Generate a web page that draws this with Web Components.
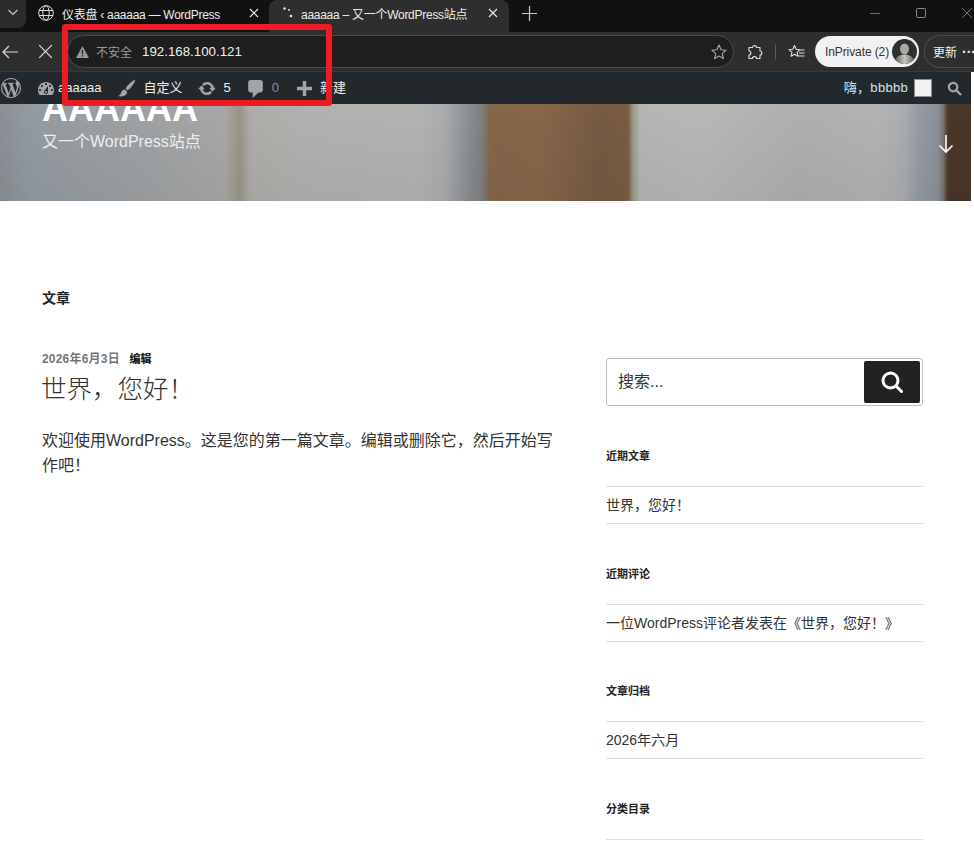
<!DOCTYPE html>
<html lang="zh-CN">
<head>
<meta charset="utf-8">
<title>aaaaaa</title>
<style>
  html, body { margin: 0; padding: 0; background: #fff; }
  body { width: 974px; height: 849px; overflow: hidden; font-family: "Liberation Sans", "Noto Sans CJK SC", sans-serif; }
</style>
</head>
<body>
<browser-shell>
  <wp-adminbar></wp-adminbar>
  <site-hero></site-hero>
  <site-content>
    <blog-post slot="main"></blog-post>
    <search-box slot="side"></search-box>
    <side-widget slot="side" heading="近期文章"><div>世界，您好！</div></side-widget>
    <side-widget slot="side" heading="近期评论"><div>一位WordPress评论者发表在《世界，您好！》</div></side-widget>
    <side-widget slot="side" heading="文章归档"><div>2026年六月</div></side-widget>
    <side-widget slot="side" heading="分类目录"></side-widget>
  </site-content>
</browser-shell>

<script>
class BrowserShell extends HTMLElement {
  constructor() {
    super();
    this.shadow = this.attachShadow({ mode: 'open' });
  }

  connectedCallback() {
    this.shadow.innerHTML = /*html*/`
      <style>
        :host { display: block; position: relative; height: 849px; overflow: hidden; color: #e6e6e6; }
        .tabs { display: flex; height: 32px; background: #111; font-size: 12px; }
        .menu { width: 26px; height: 24px; padding-bottom: 4px; background: #2b2b2b; border-radius: 0 0 8px 0; display: flex; align-items: center; justify-content: center; }
        .tab { display: flex; align-items: center; box-sizing: border-box; height: 32px; padding-bottom: 6px; }
        .tab.one { width: 243px; padding-left: 12px; padding-right: 10px; }
        .tab.two { width: 240px; padding-left: 14px; padding-right: 11px; background: #2e2e2e; border-radius: 8px 8px 0 0; }
        .tab span { flex: 1; margin-left: 8px; white-space: nowrap; color: #ececec; letter-spacing: -.27px; }
        .new { width: 40px; padding-bottom: 6px; box-sizing: border-box; display: flex; align-items: center; justify-content: center; }
        .win { margin-left: auto; display: flex; align-items: center; gap: 36px; padding: 0 2px 6px 0; }
        .bar { display: flex; align-items: center; height: 40px; background: #2e2e2e; box-sizing: border-box; border-bottom: 1px solid #3a3a3a; }
        .nav { flex: none; width: 67px; display: flex; align-items: center; gap: 21px; padding-left: 2px; box-sizing: border-box; }
        .url { flex: none; width: 667px; height: 33px; box-sizing: border-box; border: 1px solid #4c4c4c; border-radius: 17px; background: #1e1e1e; display: flex; align-items: center; padding: 0 6px 0 8px; }
        .warn { font-size: 12px; color: #9a9a9a; margin: 0 10px 0 7px; }
        .host { font-size: 13.3px; color: #f0f0f0; flex: 1; }
        .tools { flex: none; display: flex; align-items: center; width: 81px; padding-left: 13px; box-sizing: border-box; gap: 12px; }
        .sep { width: 1px; height: 16px; background: #5a5a5a; }
        .priv { flex: none; width: 104px; height: 31px; box-sizing: border-box; border-radius: 16px; background: #f1f1f1; color: #333; font-size: 12px; display: flex; align-items: center; justify-content: space-between; padding: 0 2px 0 10px; letter-spacing: -.1px; }
        .upd { margin-left: 5px; flex: 1; min-width: 0; overflow: hidden; height: 31px; border: 1px solid #4c4c4c; border-right: 0; border-radius: 16px 0 0 16px; font-size: 12px; color: #eee; display: flex; align-items: center; padding-left: 8px; gap: 5px; white-space: nowrap; }
        .upd b { font-size: 14px; }
        .mark { position: absolute; left: 62px; top: 24px; width: 270px; height: 82px; box-sizing: border-box; border: 6px solid #ed1c24; border-radius: 3px; pointer-events: none; z-index: 5; }
        svg { display: block; flex: none; }
      </style>
      <div class="tabs">
        <div class="menu"><svg width="12" height="12" viewBox="0 0 12 12" fill="none" stroke="#ccc" stroke-width="1.1"><path d="M1.5 4l4.5 4.5L10.5 4"/></svg></div>
        <div class="tab one">
          <svg width="16" height="16" viewBox="0 0 16 16" fill="none" stroke="#ddd" stroke-width="1"><circle cx="8" cy="8" r="7.3"/><ellipse cx="8" cy="8" rx="3.2" ry="7.3"/><path d="M1 5.5h14M1 10.500h14"/></svg>
          <span>仪表盘 ‹ aaaaaa — WordPress</span>
          <svg width="10" height="10" viewBox="0 0 10 10" stroke="#eee" stroke-width="1.1"><path d="M1 1l8 8M9 1l-8 8"/></svg>
        </div>
        <div class="tab two">
          <svg width="10" height="12" viewBox="0 0 10 12" fill="#e8e8e8"><circle cx="1.5" cy="1.5" r="1.2"/><circle cx="6" cy="3" r="1"/><circle cx="8" cy="9" r="1.3"/></svg>
          <span>aaaaaa – 又一个WordPress站点</span>
          <svg width="10" height="10" viewBox="0 0 10 10" stroke="#eee" stroke-width="1.1"><path d="M1 1l8 8M9 1l-8 8"/></svg>
        </div>
        <div class="new"><svg width="15" height="15" viewBox="0 0 15 15" stroke="#ccc" stroke-width="1.2"><path d="M7.5 0v15M0 7.500h15"/></svg></div>
        <div class="win">
          <svg width="10" height="10" viewBox="0 0 10 10" stroke="#6e6e6e"><path d="M0 5.500h10"/></svg>
          <svg width="10" height="10" viewBox="0 0 10 10" fill="none" stroke="#8a8a8a"><rect x=".5" y=".5" width="9" height="9" rx="1"/></svg>
          <svg width="10" height="10" viewBox="0 0 10 10" stroke="#6e6e6e"><path d="M0 0l10 10M10 0L0 10"/></svg>
        </div>
      </div>
      <div class="bar">
        <div class="nav">
          <svg width="16" height="14" viewBox="0 0 16 14" fill="none" stroke="#ddd" stroke-width="1.2"><path d="M16 7H1M7 1L1 7l6 6"/></svg>
          <svg width="13" height="13" viewBox="0 0 13 13" stroke="#e0e0e0" stroke-width="1.2"><path d="M0 0l13 13M13 0L0 13"/></svg>
        </div>
        <div class="url">
          <svg width="13" height="12" viewBox="0 0 13 12"><path d="M6.5 0L13 12H0z" fill="#999"/><path d="M6.5 4v4M6.5 9v1.5" stroke="#1e1e1e" stroke-width="1.3"/></svg>
          <span class="warn">不安全</span>
          <span class="host">192.168.100.121</span>
          <svg width="16" height="16" viewBox="0 0 16 16" fill="none" stroke="#aaa" stroke-width="1.1" stroke-linejoin="round"><path d="M8 1l2.100 4.700 5 .5-3.800 3.400 1.100 5L8 12l-4.400 2.600 1.100-5L.9 6.200l5-.5z"/></svg>
        </div>
        <div class="tools">
          <svg width="16" height="16" viewBox="0 0 16 16" fill="none" stroke="#ddd" stroke-width="1.1" stroke-linejoin="round"><path d="M5.5 3.500C5.500 1 9.500 1 9.500 3.500h3.500v3.500c2.500 0 2.500 4 0 4v3.500H9.500c0-2.500-4-2.500-4 0H2V11c2.500 0 2.500-4 0-4V3.500z"/></svg>
          <div class="sep"></div>
          <svg width="17" height="16" viewBox="0 0 17 16" fill="none" stroke="#ddd" stroke-width="1.1" stroke-linejoin="round"><path d="M6.500 1.500l1.700 3.800 3.800.4-2.900 2.600.8 3.900-3.400-2-3.400 2 .8-3.900L1 5.700l3.800-.4zM12 6h4.500M11 9h5.500M10 12h6.500"/></svg>
        </div>
        <div class="priv"><span>InPrivate (2)</span>
          <svg width="25" height="25" viewBox="0 0 25 25"><defs><clipPath id="av"><circle cx="12.500" cy="12.500" r="12.500"/></clipPath><linearGradient id="sh" x1="0" x2="1" y1="0" y2="0"><stop offset="0" stop-color="#555"/><stop offset=".5" stop-color="#c9c6bd"/><stop offset="1" stop-color="#666"/></linearGradient></defs><g clip-path="url(#av)"><rect width="25" height="25" fill="#2f2f2d"/><ellipse cx="12.500" cy="10" rx="4.500" ry="5.500" fill="#aaa79f"/><ellipse cx="12.500" cy="23" rx="10" ry="7.500" fill="url(#sh)"/></g></svg>
        </div>
        <div class="upd">更新 <b>···</b></div>
      </div>
      <slot></slot>
      <div class="mark"></div>
    `;
  }
}

class WpAdminbar extends HTMLElement {
  constructor() {
    super();
    this.shadow = this.attachShadow({ mode: 'open' });
  }

  connectedCallback() {
    this.shadow.innerHTML = /*html*/`
      <style>
        :host { display: flex; align-items: center; position: relative; z-index: 2; height: 32px; margin-right: 3px; background: #23282d; color: #eee; font: 13px/32px "Liberation Sans", "Noto Sans CJK SC", sans-serif; white-space: nowrap; }
        .left { display: flex; align-items: center; }
        .right { margin-left: auto; display: flex; align-items: center; }
        svg { display: block; flex: none; fill: #a0a5aa; }
        .dim { color: #8c9196; }
        .hi { color: #cfe4f2; letter-spacing: .3px; }
      </style>
      <div class="left">
        <svg style="margin-left:1px" width="20" height="20" viewBox="0 0 20 20"><path d="M20 10c0-5.51-4.49-10-10-10C4.48 0 0 4.49 0 10c0 5.52 4.48 10 10 10 5.51 0 10-4.48 10-10zM7.78 15.37L4.37 6.22c.55-.02 1.17-.08 1.17-.08.5-.06.44-1.13-.06-1.11 0 0-1.45.11-2.37.11-.18 0-.37 0-.58-.01C4.12 2.69 6.87 1.11 10 1.11c2.33 0 4.45.87 6.05 2.34-.68-.11-1.65.39-1.65 1.58 0 .74.45 1.36.9 2.1.35.61.55 1.36.55 2.46 0 1.49-1.4 5-1.4 5l-3.03-8.37c.54-.02.82-.17.82-.17.5-.05.44-1.25-.06-1.22 0 0-1.44.12-2.38.12-.87 0-2.33-.12-2.33-.12-.5-.03-.56 1.2-.06 1.22l.92.08 1.26 3.41zM17.41 10c.24-.64.74-1.87.43-4.25.7 1.29 1.05 2.71 1.05 4.25 0 3.29-1.73 6.24-4.4 7.78.97-2.59 1.94-5.2 2.92-7.78zM6.1 18.09C3.12 16.65 1.11 13.53 1.11 10c0-1.3.23-2.48.72-3.59C3.25 10.3 4.67 14.2 6.1 18.09zm4.03-6.63l2.58 6.98c-.86.29-1.76.45-2.71.45-.79 0-1.57-.11-2.29-.33.81-2.38 1.62-4.74 2.42-7.1z"/></svg>
        <svg style="margin-left:17px" width="16" height="13" viewBox="2 3 16 13"><path fill-rule="evenodd" d="M3.76 16h12.48c1.1-1.37 1.76-3.11 1.76-5 0-4.42-3.58-8-8-8s-8 3.58-8 8c0 1.89.66 3.63 1.76 5zM10 4c.55 0 1 .45 1 1s-.45 1-1 1-1-.45-1-1 .45-1 1-1zM6 6c.55 0 1 .45 1 1s-.45 1-1 1-1-.45-1-1 .45-1 1-1zm8 0c.55 0 1 .45 1 1s-.45 1-1 1-1-.45-1-1 .45-1 1-1zm-5.37 5.55L12 7v6c0 1.1-.9 2-2 2s-2-.9-2-2c0-.57.24-1.08.63-1.45zM4 10c.55 0 1 .45 1 1s-.45 1-1 1-1-.45-1-1 .45-1 1-1zm12 0c.55 0 1 .45 1 1s-.45 1-1 1-1-.45-1-1 .45-1 1-1zm-5 3c0-.55-.45-1-1-1s-1 .45-1 1 .45 1 1 1 1-.45 1-1z"/></svg>
        <span style="margin-left:4px">aaaaaa</span>
        <svg style="margin-left:17px" width="18" height="18" viewBox="0 0 18 18"><path d="M17.5.5C14 2 9.500 6 7.500 9.500l2 2C13 9.500 16.500 4 17.500.5zM6.500 10.500C4 10.500 3.500 13 2.500 15c-.5 1-1.500 1.500-2.500 2 3 1 7.500.5 9-2.500.5-1.500-.5-3.500-2.500-4z"/></svg>
        <span style="margin-left:7px">自定义</span>
        <svg style="margin-left:16px" width="18" height="13" viewBox="0.800 3.280 18.400 13.440"><path d="M10.200 3.280c3.530 0 6.430 2.610 6.920 6h2.080l-3.500 4-3.500-4h2.320c-.45-1.970-2.210-3.450-4.320-3.450-1.450 0-2.730.71-3.540 1.780L4.950 5.660C6.230 4.200 8.110 3.280 10.200 3.280zm-.4 13.440c-3.520 0-6.430-2.610-6.920-6H.8l3.500-4c1.170 1.330 2.330 2.670 3.500 4H5.480c.45 1.970 2.210 3.450 4.320 3.450 1.450 0 2.730-.71 3.540-1.780l1.710 1.950c-1.280 1.460-3.150 2.380-5.250 2.380z"/></svg>
        <span style="margin-left:7px">5</span>
        <svg style="margin:2px 0 0 17px" width="15" height="18" viewBox="3 2 13 16"><path d="M5 2h9c1.100 0 2 .9 2 2v7c0 1.100-.9 2-2 2h-2l-5 5v-5H5c-1.100 0-2-.9-2-2V4c0-1.100.9-2 2-2z"/></svg>
        <span class="dim" style="margin-left:9px">0</span>
        <svg style="margin-left:18px" width="15" height="15" viewBox="4 2 13 13"><path d="M17 7v3h-5v5H9v-5H4V7h5V2h3v5h5z"/></svg>
        <span style="margin-left:8px">新建</span>
      </div>
      <div class="right">
        <span class="hi">嗨，bbbbb</span>
        <div style="width:16px;height:16px;margin-left:6px;background:#f1f1f1;border:1px solid #8c8f94"></div>
        <svg style="margin:0 9px 0 15px;fill:none;stroke:#a0a5aa;stroke-width:2.4" width="15" height="15" viewBox="0 0 16 16"><circle cx="6.500" cy="6.500" r="4.500"/><path d="M10 10l5 5"/></svg>
      </div>
    `;
  }
}

class SiteHero extends HTMLElement {
  constructor() {
    super();
    this.shadow = this.attachShadow({ mode: 'open' });
  }

  connectedCallback() {
    this.shadow.innerHTML = /*html*/`
      <style>
        :host { display: flex; flex-direction: column; justify-content: flex-end; box-sizing: border-box; height: 97px; margin-right: 3px; padding: 0 17px 47px 42px; overflow: hidden; color: #fff;
          background:
            linear-gradient(180deg, rgba(0,0,0,0) 0, rgba(0,0,0,.05) 100%),
            linear-gradient(90deg, #8a9095 0, #939ba1 30px, #9a9fa3 100px, #a2a4a5 180px, #a8a8a5 225px, #9a9488 240px, #adadaa 250px, #b1b1af 300px, #b3b3b2 420px, #a9abad 445px, #8e9398 465px, #7f7f7d 482px, #84664a 490px, #86674a 540px, #765a43 600px, #7a5c42 628px, #9a9a88 633px, #b5b5b3 640px, #b8b8b7 700px, #afafaf 800px, #b3b3b3 880px, #a9acaf 905px, #939aa3 920px, #8b9199 938px, #7a7672 943px, #4b3628 948px, #4a3629 971px); }
        h1 { margin: 0; font: 800 36px/36px "Liberation Sans", "Noto Sans CJK SC", sans-serif; }
        p { margin: 3px 0 0; font: 16px/24px "Liberation Sans", "Noto Sans CJK SC", sans-serif; color: #eee; }
        .row { display: flex; justify-content: space-between; align-items: center; }
        svg { margin-top: 7px; }
      </style>
      <h1>AAAAAA</h1>
      <div class="row">
        <p>又一个WordPress站点</p>
        <svg width="16" height="20" viewBox="0 0 16 20" fill="none" stroke="#fff" stroke-width="1.6"><path d="M8 1v17M1.500 11.500L8 18l6.500-6.500"/></svg>
      </div>
    `;
  }
}

class SiteContent extends HTMLElement {
  constructor() {
    super();
    this.shadow = this.attachShadow({ mode: 'open' });
  }

  connectedCallback() {
    this.shadow.innerHTML = /*html*/`
      <style>
        :host { display: block; padding: 89px 51px 0 42px; color: #333; font-family: "Liberation Sans", "Noto Sans CJK SC", sans-serif; }
        h2 { margin: 0; font-size: 14px; line-height: 16px; font-weight: 700; color: #222; }
        .grid { display: grid; grid-template-columns: 512px 317px; column-gap: 52px; margin-top: 45px; }
        .side { padding-top: 7px; }
      </style>
      <h2>文章</h2>
      <div class="grid">
        <div><slot name="main"></slot></div>
        <div class="side"><slot name="side"></slot></div>
      </div>
    `;
  }
}

class BlogPost extends HTMLElement {
  constructor() {
    super();
    this.shadow = this.attachShadow({ mode: 'open' });
  }

  connectedCallback() {
    this.shadow.innerHTML = /*html*/`
      <style>
        :host { display: block; }
        .meta { font-size: 12px; line-height: 16px; font-weight: 700; color: #767676; letter-spacing: .2px; }
        .meta b { font-size: 11px; color: #222; margin-left: 6px; letter-spacing: 0; }
        h3 { margin: 7px 0 0 -1px; font-size: 25.5px; line-height: 30px; font-weight: 300; color: #333; }
        p { margin: 24px 0 0; font-size: 16px; line-height: 25px; color: #333; }
      </style>
      <div class="meta">2026年6月3日 <b>编辑</b></div>
      <h3>世界，您好！</h3>
      <p>欢迎使用WordPress。这是您的第一篇文章。编辑或删除它，然后开始写作吧！</p>
    `;
  }
}

class SearchBox extends HTMLElement {
  constructor() {
    super();
    this.shadow = this.attachShadow({ mode: 'open' });
  }

  connectedCallback() {
    this.shadow.innerHTML = /*html*/`
      <style>
        :host { display: flex; align-items: center; justify-content: space-between; box-sizing: border-box; height: 48px; margin-bottom: 41px; border: 1px solid #bbb; border-radius: 3px; padding: 0 2px 0 11px; font-size: 16px; color: #333; }
        span { padding-bottom: 4px; }
        .btn { width: 56px; height: 42px; background: #222; border-radius: 2px; display: flex; align-items: center; justify-content: center; }
      </style>
      <span>搜索...</span>
      <div class="btn"><svg width="22" height="22" viewBox="0 0 22 22" fill="none" stroke="#fff" stroke-width="3" stroke-linecap="round"><circle cx="9.500" cy="9.500" r="7.500"/><path d="M15 15l5.500 5.500"/></svg></div>
    `;
  }
}

class SideWidget extends HTMLElement {
  constructor() {
    super();
    this.shadow = this.attachShadow({ mode: 'open' });
  }

  connectedCallback() {
    this.shadow.innerHTML = /*html*/`
      <style>
        :host { display: block; margin-bottom: 40.67px; }
        h4 { margin: 0 0 22px; padding-top: 1px; font-size: 11px; line-height: 16px; font-weight: 700; color: #222; }
        .list { border-top: 1px solid #ddd; }
        ::slotted(div) { border-bottom: 1px solid #ddd; font-size: 14px; line-height: 36px; color: #333; white-space: nowrap; }
      </style>
      <h4>${this.getAttribute('heading')}</h4>
      <div class="list"><slot></slot></div>
    `;
  }
}

customElements.define('browser-shell', BrowserShell);
customElements.define('wp-adminbar', WpAdminbar);
customElements.define('site-hero', SiteHero);
customElements.define('site-content', SiteContent);
customElements.define('blog-post', BlogPost);
customElements.define('search-box', SearchBox);
customElements.define('side-widget', SideWidget);
</script>
</body>
</html>
